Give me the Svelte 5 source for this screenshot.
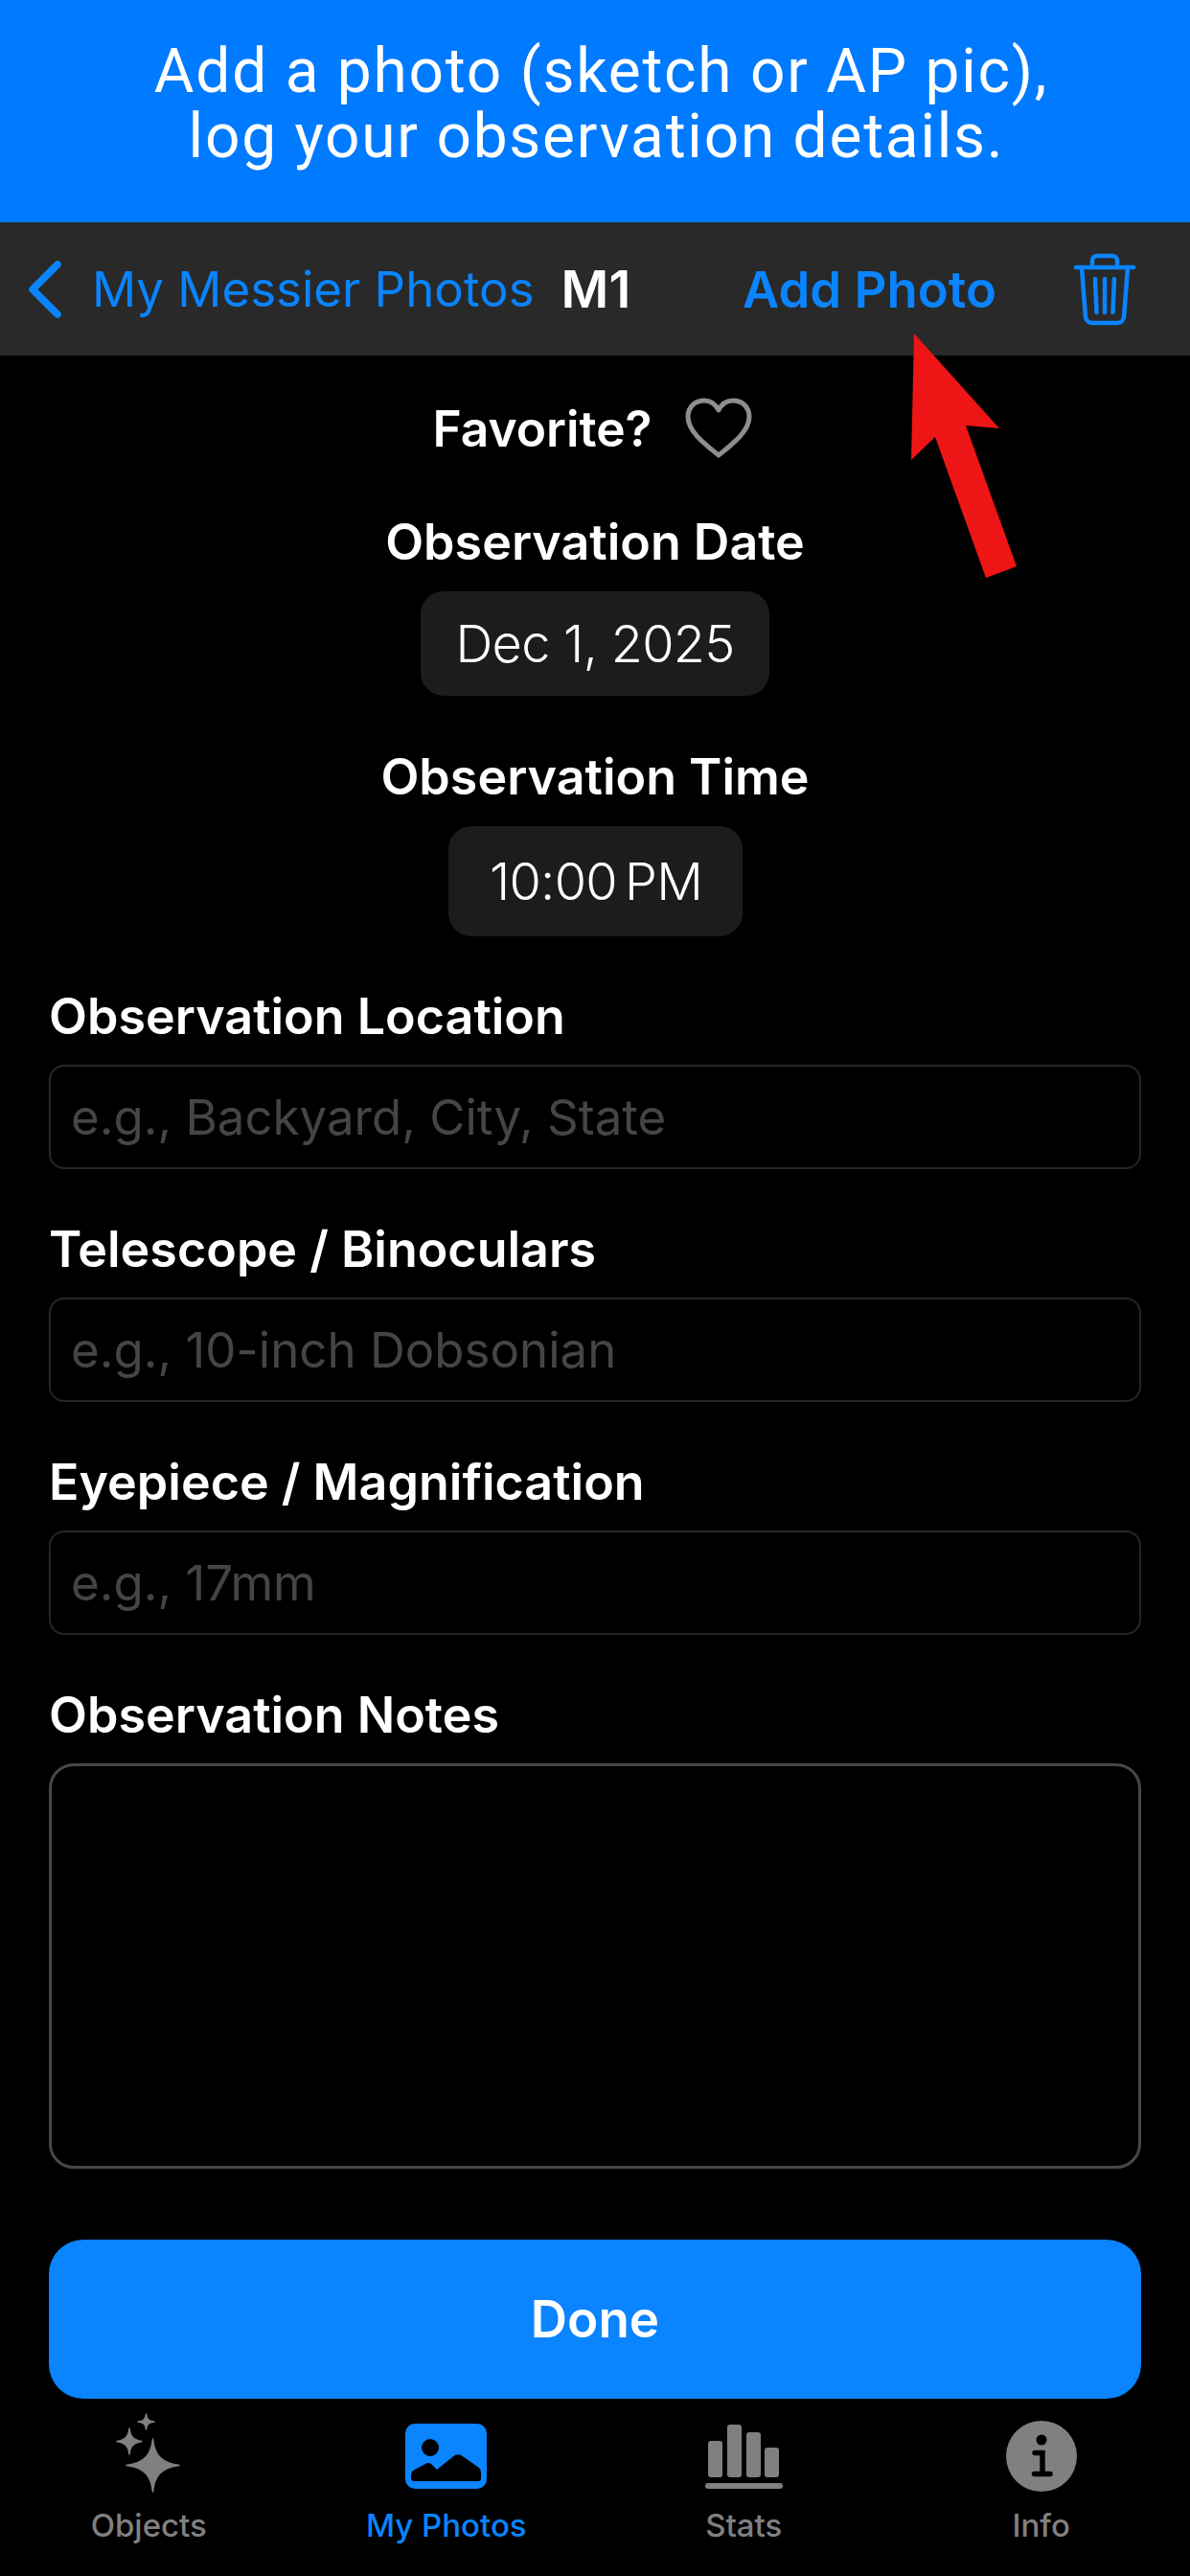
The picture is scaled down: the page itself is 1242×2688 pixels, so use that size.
<script>
  const fields = [
    { label: 'Observation Location', hint: 'e.g., Backyard, City, State' },
    { label: 'Telescope / Binoculars', hint: 'e.g., 10-inch Dobsonian' },
    { label: 'Eyepiece / Magnification', hint: 'e.g., 17mm' }
  ];
</script>

<div class="screen">
  <header class="banner">
    <p class="line-one">Add a photo (sketch or AP pic),</p>
    <p class="line-two">log your observation details.</p>
  </header>

  <nav class="navbar">
    <svg class="chevron" width="40" height="62" viewBox="0 0 40 62" fill="none" stroke="#0a84ff" stroke-width="7.5" stroke-linecap="round" stroke-linejoin="round">
      <polyline points="32,5 6,31 32,57" />
    </svg>
    <span class="back">My Messier Photos</span>
    <span class="title">M1</span>
    <span class="add">Add Photo</span>
    <svg class="trash" width="66" height="76" viewBox="0 0 66 76" fill="none" stroke="#0a84ff" stroke-width="4.5" stroke-linecap="round" stroke-linejoin="round">
      <path d="M3 15h60" />
      <path d="M20 15V8a5 5 0 0 1 5-5h16a5 5 0 0 1 5 5v7" />
      <path d="M9 15l4 52a7 7 0 0 0 7 6h26a7 7 0 0 0 7-6l4-52" />
      <path d="M23 27l1.500 35M33 27v35M43 27l-1.500 35" />
    </svg>
  </nav>

  <svg class="arrow" width="112" height="257" viewBox="0 0 112 257">
    <polygon points="3,0 92,99 57,96 110,243 78,255 25,108 0,132" fill="#ed1515" />
  </svg>

  <main class="form">
    <div class="favorite">
      <span>Favorite?</span>
      <svg width="70" height="64" viewBox="0 0 70 64" fill="none" stroke="#8e8e8e" stroke-width="5" stroke-linejoin="round">
        <path d="M35 60C20 48 3 35 3 20 3 9 11 3 20 3c7 0 12 4 15 10C38 7 43 3 50 3c9 0 17 6 17 17 0 15-17 28-32 40z" />
      </svg>
    </div>

    <div class="centered first">
      <h2>Observation Date</h2>
      <div class="pill date">Dec 1, 2025</div>
    </div>
    <div class="centered second">
      <h2>Observation Time</h2>
      <div class="pill time">10:00<span class="pm">PM</span></div>
    </div>

    {#each fields as f}
      <div class="field">
        <h2>{f.label}</h2>
        <div class="input">{f.hint}</div>
      </div>
    {/each}

    <div class="field">
      <h2>Observation Notes</h2>
      <div class="notes"></div>
    </div>

    <button class="done">Done</button>
  </main>

  <footer class="tabs">
    <div class="tab">
      <svg width="70" height="90" viewBox="0 0 70 90" fill="#808080" stroke="#808080" stroke-width="1.500" stroke-linejoin="round">
        <path d="M39.500 27C41 42 47 52 67 54.500 47 57 41 67 39.500 82 38 67 32 57 12 54.500 32 52 38 42 39.500 27z" />
        <path d="M15 16c.7 8 4 12 13 13.500-9 1.500-12.300 5.500-13 13.500-.7-8-4-12-13-13.500C11 28 14.300 24 15 16z" />
        <path d="M32.500 1c.5 5 2.500 7.500 8.500 8-6 .5-8 3-8.500 8-.5-5-2.500-7.500-8.500-8 6-.5 8-3 8.500-8z" />
      </svg>
      <span>Objects</span>
    </div>
    <div class="tab active">
      <svg width="86" height="68" viewBox="0 0 86 68">
        <rect width="85" height="68" rx="10" fill="#0a84ff" />
        <circle cx="26" cy="25" r="9" fill="#000" />
        <path d="M6 54Q6 51 8 49L21 42Q24 40 27 42L33 48 51 33.500Q55 31 59 33.500L77 46Q79 48 79 51V57Q79 60 76 60H9Q6 60 6 57Z" fill="#000" />
      </svg>
      <span>My Photos</span>
    </div>
    <div class="tab">
      <svg width="84" height="68" viewBox="0 0 84 68" fill="#808080">
        <rect x="5" y="18" width="15" height="38" rx="3" />
        <rect x="25" y="1" width="15" height="55" rx="3" />
        <rect x="45" y="9" width="15" height="47" rx="3" />
        <rect x="64" y="25" width="15" height="31" rx="3" />
        <rect x="2" y="62" width="81" height="6" rx="3" />
      </svg>
      <span>Stats</span>
    </div>
    <div class="tab">
      <svg width="74" height="74" viewBox="0 0 74 74">
        <circle cx="37" cy="37" r="37" fill="#808080" />
        <circle cx="37" cy="20" r="5.500" fill="#000" />
        <path d="M30 33.500H38V55M29.500 55.500H46" fill="none" stroke="#000" stroke-width="5.500" stroke-linecap="round" />
      </svg>
      <span>Info</span>
    </div>
  </footer>
</div>

<style>
  :global(body) {
    margin: 0;
    background: #000;
  }
  .screen {
    position: relative;
    width: 1242px;
    height: 2688px;
    overflow: hidden;
    background: #000;
    color: #fff;
    font-family: Inter, "Noto Sans", sans-serif;
  }
  .banner {
    height: 232px;
    box-sizing: border-box;
    padding-top: 41px;
    background: #007aff;
    text-align: center;
    font-family: Roboto, sans-serif;
    font-weight: 400;
    font-size: 64px;
    line-height: 68px;
    letter-spacing: 1.75px;
  }
  .banner p {
    margin: 0;
  }
  .banner .line-one {
    padding-left: 13px;
  }
  .banner .line-two {
    padding-left: 3px;
  }
  .navbar {
    height: 139px;
    background: #292929;
    display: flex;
    align-items: center;
    font-size: 51px;
    position: relative;
  }
  .chevron {
    margin-left: 28px;
  }
  .back {
    margin-left: 28px;
    color: #0a84ff;
  }
  .title {
    margin-left: 28px;
    font-size: 54px;
    font-weight: 600;
  }
  .add {
    margin-left: auto;
    font-size: 52.700px;
    color: #0a84ff;
    font-weight: 600;
  }
  .trash {
    margin: 0 56px 0 80px;
  }
  .arrow {
    position: absolute;
    left: 951px;
    top: 348px;
  }
  .form {
    padding: 0 51px;
    display: flex;
    flex-direction: column;
  }
  h2 {
    margin: 0;
    font-size: 52px;
    font-weight: 600;
    line-height: 60px;
  }
  .favorite {
    margin-top: 44px;
    height: 64px;
    padding-right: 6px;
    display: flex;
    justify-content: center;
    align-items: center;
    gap: 34px;
    font-size: 51.500px;
    font-weight: 600;
  }
  .centered {
    display: flex;
    flex-direction: column;
    align-items: center;
    gap: 21px;
  }
  .first {
    margin-top: 57px;
  }
  .second {
    margin-top: 55px;
  }
  .pill {
    box-sizing: border-box;
    background: #1c1c1e;
    border-radius: 24px;
    font-size: 54px;
    font-weight: 350;
    letter-spacing: -0.700px;
    display: flex;
    align-items: center;
    justify-content: center;
  }
  .date {
    width: 364px;
    height: 109px;
  }
  .time {
    width: 307px;
    height: 115px;
    padding-left: 2px;
  }
  .pm {
    margin-left: 8px;
  }
  .field {
    margin-top: 54px;
    display: flex;
    flex-direction: column;
    gap: 20px;
  }
  .input {
    box-sizing: border-box;
    height: 109px;
    border: 2px solid #262628;
    border-radius: 16px;
    padding-left: 21px;
    display: flex;
    align-items: center;
    font-size: 51px;
    color: #454547;
  }
  .notes {
    box-sizing: border-box;
    height: 423px;
    border: 3px solid #48484a;
    border-radius: 26px;
  }
  .done {
    margin-top: 74px;
    height: 166px;
    border: none;
    border-radius: 36px;
    background: #0a84ff;
    color: #fff;
    font: 600 53px Inter, sans-serif;
  }
  .tabs {
    position: absolute;
    left: 0;
    right: 0;
    top: 2518px;
    height: 170px;
    display: grid;
    grid-template-columns: repeat(4, 1fr);
  }
  .tab {
    display: flex;
    flex-direction: column;
    align-items: center;
    color: #808080;
    font-size: 33px;
    font-weight: 500;
  }
  .tab svg {
    height: 90px;
  }
  .tab span {
    margin-top: 7px;
  }
  .tab.active {
    color: #0a84ff;
  }
</style>
